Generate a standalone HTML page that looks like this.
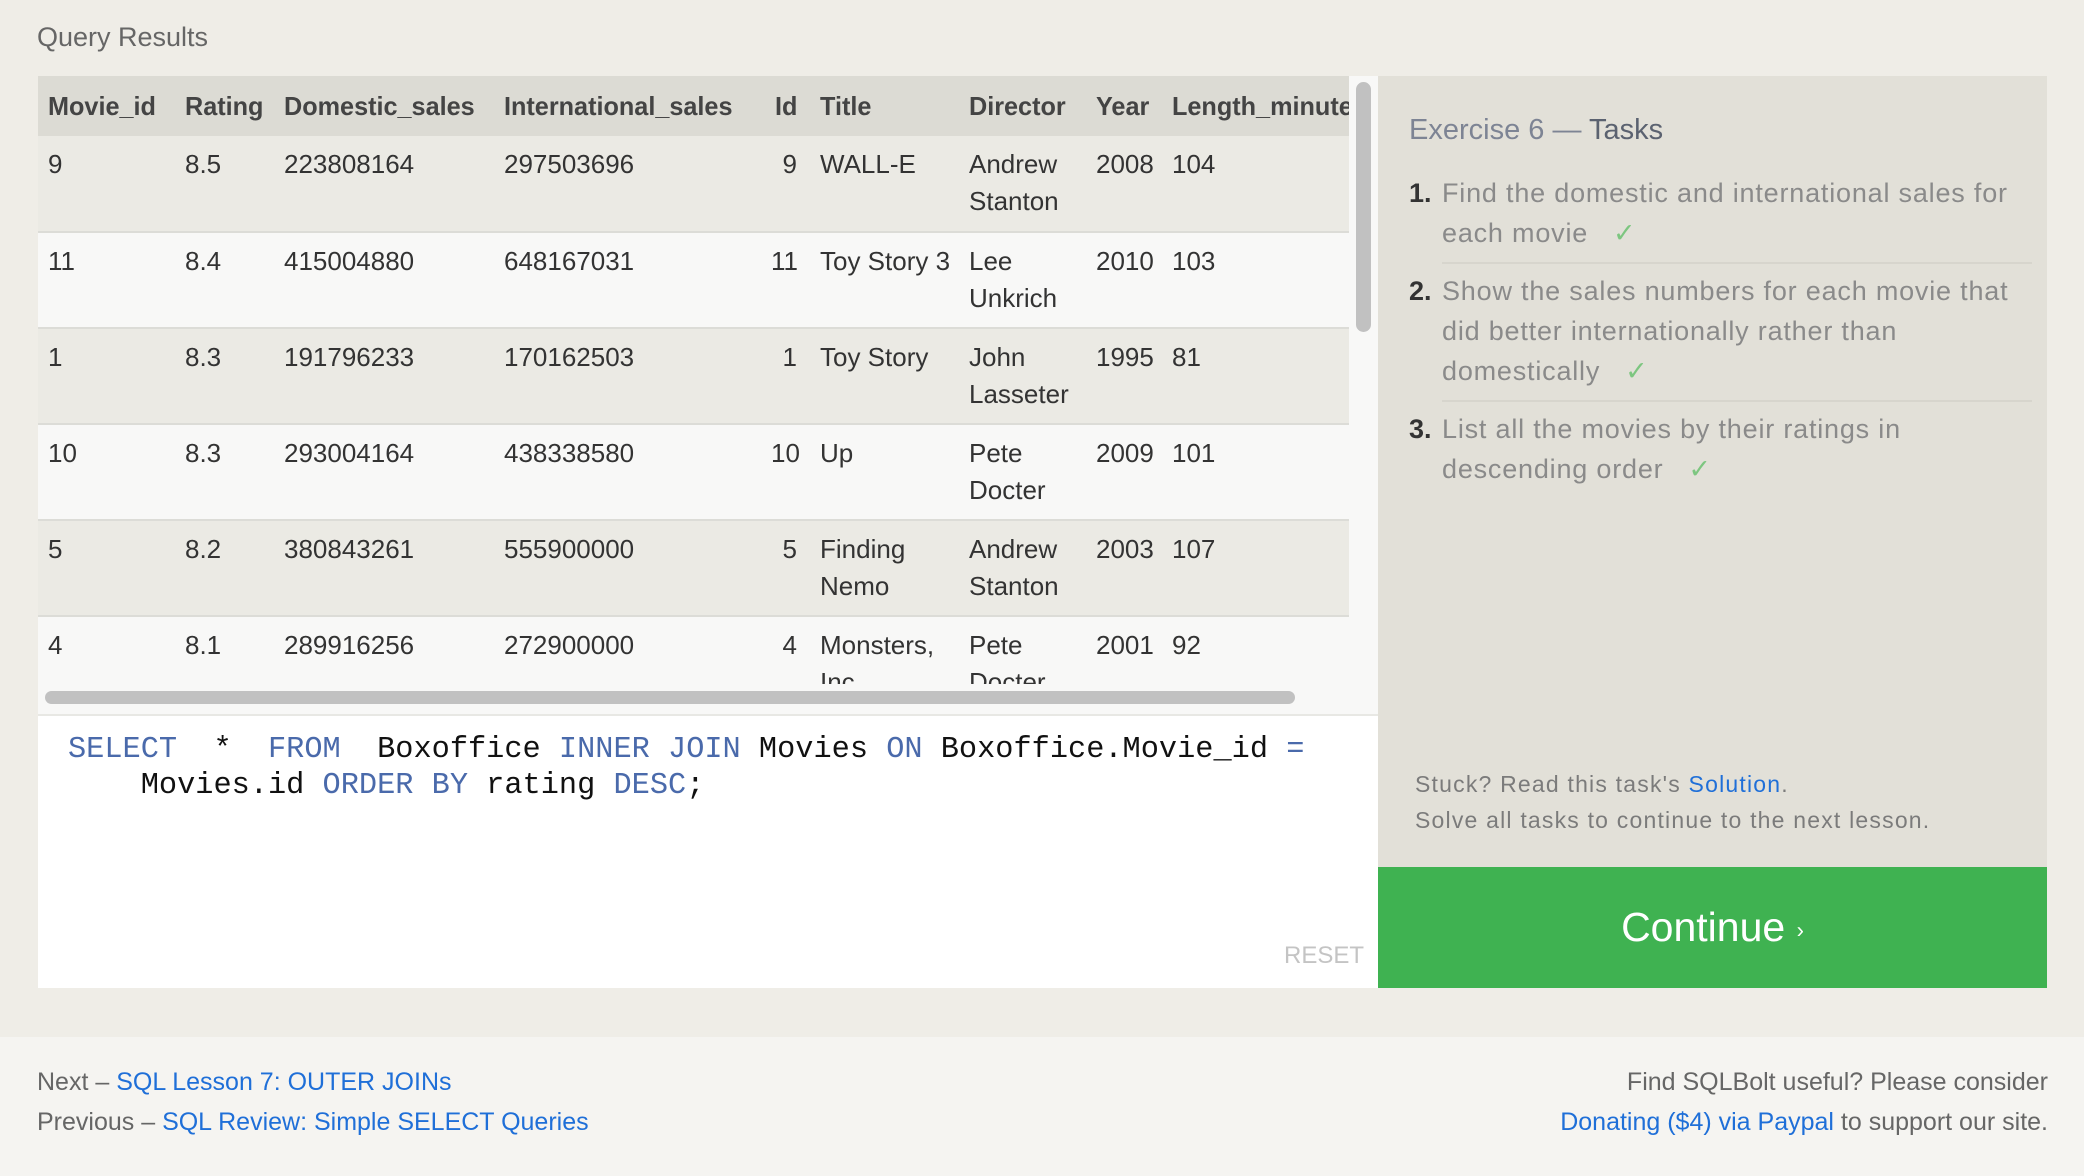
<!DOCTYPE html>
<html><head><meta charset="utf-8"><style>
*{margin:0;padding:0;box-sizing:border-box}
body{width:2084px;height:1176px;background:#efede7;font-family:"Liberation Sans",sans-serif;position:relative;overflow:hidden;color:#333}
.a{position:absolute;white-space:nowrap}
#tbl{position:absolute;left:38px;top:76px;width:1311px;height:608px;overflow:hidden;background:#f8f8f7}
.row{position:absolute;left:0;width:1311px;border-bottom:2px solid #dcdcd7}
.c{position:absolute;font-size:26px;line-height:37px;color:#333;white-space:nowrap}
.h .c{font-weight:bold;color:#444;font-size:26px;transform:scaleX(.97);transform-origin:left}
.kw{color:#4a6aab}
</style></head><body>
<div class="a" style="left:37px;top:22px;font-size:27px;color:#666">Query Results</div>

<div id="tbl">
<div class="row h" style="top:0;height:60px;background:#dcdbd4;border:none">
<div class="c" style="left:10px;top:12px">Movie_id</div><div class="c" style="left:147px;top:12px">Rating</div><div class="c" style="left:246px;top:12px">Domestic_sales</div><div class="c" style="left:466px;top:12px">International_sales</div><div class="c" style="left:737px;top:12px">Id</div><div class="c" style="left:782px;top:12px">Title</div><div class="c" style="left:931px;top:12px">Director</div><div class="c" style="left:1058px;top:12px">Year</div><div class="c" style="left:1134px;top:12px">Length_minutes</div>
</div>
<div class="row" style="top:60px;height:97px;background:#ebeae4">
<div class="c" style="left:10px;top:10px">9</div><div class="c" style="left:147px;top:10px">8.5</div><div class="c" style="left:246px;top:10px">223808164</div><div class="c" style="left:466px;top:10px">297503696</div><div class="c" style="left:737px;top:10px;width:22px;text-align:right">9</div><div class="c" style="left:782px;top:10px">WALL-E</div><div class="c" style="left:931px;top:10px">Andrew<br>Stanton</div><div class="c" style="left:1058px;top:10px">2008</div><div class="c" style="left:1134px;top:10px">104</div></div>
<div class="row" style="top:157px;height:96px;background:#f8f8f7">
<div class="c" style="left:10px;top:10px">11</div><div class="c" style="left:147px;top:10px">8.4</div><div class="c" style="left:246px;top:10px">415004880</div><div class="c" style="left:466px;top:10px">648167031</div><div class="c" style="left:733px;top:10px;width:26px;text-align:right">11</div><div class="c" style="left:782px;top:10px">Toy Story 3</div><div class="c" style="left:931px;top:10px">Lee<br>Unkrich</div><div class="c" style="left:1058px;top:10px">2010</div><div class="c" style="left:1134px;top:10px">103</div></div>
<div class="row" style="top:253px;height:96px;background:#ebeae4">
<div class="c" style="left:10px;top:10px">1</div><div class="c" style="left:147px;top:10px">8.3</div><div class="c" style="left:246px;top:10px">191796233</div><div class="c" style="left:466px;top:10px">170162503</div><div class="c" style="left:737px;top:10px;width:22px;text-align:right">1</div><div class="c" style="left:782px;top:10px">Toy Story</div><div class="c" style="left:931px;top:10px">John<br>Lasseter</div><div class="c" style="left:1058px;top:10px">1995</div><div class="c" style="left:1134px;top:10px">81</div></div>
<div class="row" style="top:349px;height:96px;background:#f8f8f7">
<div class="c" style="left:10px;top:10px">10</div><div class="c" style="left:147px;top:10px">8.3</div><div class="c" style="left:246px;top:10px">293004164</div><div class="c" style="left:466px;top:10px">438338580</div><div class="c" style="left:733px;top:10px;width:26px;text-align:right">10</div><div class="c" style="left:782px;top:10px">Up</div><div class="c" style="left:931px;top:10px">Pete<br>Docter</div><div class="c" style="left:1058px;top:10px">2009</div><div class="c" style="left:1134px;top:10px">101</div></div>
<div class="row" style="top:445px;height:96px;background:#ebeae4">
<div class="c" style="left:10px;top:10px">5</div><div class="c" style="left:147px;top:10px">8.2</div><div class="c" style="left:246px;top:10px">380843261</div><div class="c" style="left:466px;top:10px">555900000</div><div class="c" style="left:737px;top:10px;width:22px;text-align:right">5</div><div class="c" style="left:782px;top:10px">Finding<br>Nemo</div><div class="c" style="left:931px;top:10px">Andrew<br>Stanton</div><div class="c" style="left:1058px;top:10px">2003</div><div class="c" style="left:1134px;top:10px">107</div></div>
<div class="row" style="top:541px;height:96px;background:#f8f8f7;border:none">
<div class="c" style="left:10px;top:10px">4</div><div class="c" style="left:147px;top:10px">8.1</div><div class="c" style="left:246px;top:10px">289916256</div><div class="c" style="left:466px;top:10px">272900000</div><div class="c" style="left:737px;top:10px;width:22px;text-align:right">4</div><div class="c" style="left:782px;top:10px">Monsters,<br>Inc.</div><div class="c" style="left:931px;top:10px">Pete<br>Docter</div><div class="c" style="left:1058px;top:10px">2001</div><div class="c" style="left:1134px;top:10px">92</div></div>
</div>
<div class="a" style="left:1349px;top:76px;width:29px;height:638px;background:#f8f8f7"></div>
<div class="a" style="left:1356px;top:82px;width:15px;height:250px;background:#c1c1c1;border-radius:8px"></div>
<div class="a" style="left:38px;top:684px;width:1311px;height:30px;background:#f8f8f7"></div>
<div class="a" style="left:45px;top:691px;width:1250px;height:13px;background:#c1c1c1;border-radius:7px"></div>

<div class="a" style="left:38px;top:714px;width:1340px;height:274px;background:#fff;border-top:2px solid #e8e8e4"></div>
<div class="a" style="left:68px;top:732px;font-family:'Liberation Mono',monospace;font-size:30.3px;line-height:36px;color:#111;white-space:pre"><span class="kw">SELECT</span>  *  <span class="kw">FROM</span>  Boxoffice <span class="kw">INNER JOIN</span> Movies <span class="kw">ON</span> Boxoffice.Movie_id <span class="kw">=</span>
    Movies.id <span class="kw">ORDER BY</span> rating <span class="kw">DESC</span>;</div>
<div class="a" style="left:1284px;top:942px;font-size:24px;color:#c4c4c4">RESET</div>

<div class="a" style="left:1378px;top:76px;width:669px;height:791px;background:#e2e0d8"></div>
<div class="a" style="left:1409px;top:114px;font-size:29px;color:#7d8494">Exercise 6 — <span style="color:#5b6270">Tasks</span></div>
<div class="a" style="left:1409px;top:173px;font-size:27px;line-height:40px;color:#333;font-weight:bold">1.</div>
<div class="a" style="left:1442px;top:173px;font-size:27px;line-height:40px;color:#8a8a8a;letter-spacing:.8px">Find the domestic and international sales for<br>each movie &nbsp;&nbsp;<span style="color:#7dc680">✓</span></div>
<div class="a" style="left:1442px;top:262px;width:590px;height:2px;background:#d7d5cd"></div>
<div class="a" style="left:1409px;top:271px;font-size:27px;line-height:40px;color:#333;font-weight:bold">2.</div>
<div class="a" style="left:1442px;top:271px;font-size:27px;line-height:40px;color:#8a8a8a;letter-spacing:.8px">Show the sales numbers for each movie that<br>did better internationally rather than<br>domestically &nbsp;&nbsp;<span style="color:#7dc680">✓</span></div>
<div class="a" style="left:1442px;top:400px;width:590px;height:2px;background:#d7d5cd"></div>
<div class="a" style="left:1409px;top:409px;font-size:27px;line-height:40px;color:#333;font-weight:bold">3.</div>
<div class="a" style="left:1442px;top:409px;font-size:27px;line-height:40px;color:#8a8a8a;letter-spacing:.8px">List all the movies by their ratings in<br>descending order &nbsp;&nbsp;<span style="color:#7dc680">✓</span></div>
<div class="a" style="left:1415px;top:766px;font-size:23px;line-height:36px;color:#7b7b7b;letter-spacing:1.2px">Stuck? Read this task's <span style="color:#1f6fd8">Solution</span>.<br>Solve all tasks to continue to the next lesson.</div>
<div class="a" style="left:1378px;top:867px;width:669px;height:121px;background:#3fb251;color:#fff;font-size:41px;text-align:center;line-height:121px">Continue <span style="font-size:22px;vertical-align:middle">›</span></div>

<div class="a" style="left:0;top:1037px;width:2084px;height:139px;background:#f5f4f1"></div>
<div class="a" style="left:37px;top:1062px;font-size:25px;line-height:40px;color:#666">Next – <span style="color:#1f6fd8">SQL Lesson 7: OUTER JOINs</span><br>Previous – <span style="color:#1f6fd8">SQL Review: Simple SELECT Queries</span></div>
<div class="a" style="right:36px;top:1062px;font-size:25px;line-height:40px;color:#666;text-align:right">Find SQLBolt useful? Please consider<br><span style="color:#1f6fd8">Donating ($4) via Paypal</span> to support our site.</div>
</body></html>
